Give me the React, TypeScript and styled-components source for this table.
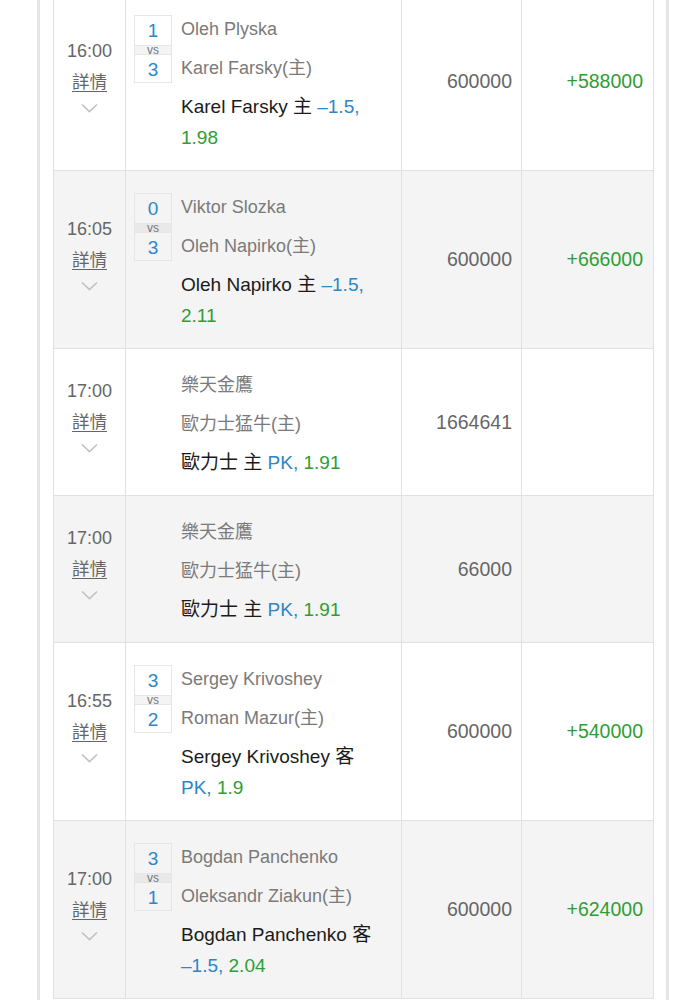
import React from "react";
import styled, { createGlobalStyle } from "styled-components";

const GlobalStyle = createGlobalStyle`
  body {
    margin: 0;
    background: #fff;
    font-family: "Liberation Sans", "Noto Sans CJK TC", sans-serif;
  }
`;

const Page = styled.div`
  padding-left: 37px;
  overflow: hidden;
`;

const Card = styled.div`
  width: 632px;
  box-sizing: border-box;
  border-left: 3px solid #e6e6e6;
  border-right: 3px solid #e6e6e6;
  padding: 0 14px 40px 13px;
  background: #fff;
`;

const Table = styled.div`
  width: 599px;
  margin-top: -8px;
  border-left: 1px solid #e1e1e1;
  border-right: 1px solid #e1e1e1;
  border-top: 1px solid #e1e1e1;
`;

const Row = styled.div<{ $striped: boolean }>`
  display: grid;
  grid-template-columns: 71px 276px 120px 130px;
  border-bottom: 1px solid #e1e1e1;
  background: ${(p) => (p.$striped ? "#f4f4f4" : "#fff")};
`;

const Cell = styled.div`
  box-sizing: border-box;
  border-left: 1px solid #e1e1e1;
`;

const TimeCell = styled.div`
  display: flex;
  flex-direction: column;
  align-items: center;
  justify-content: center;
  padding-bottom: 15px;
  color: #666;
`;

const Time = styled.div`
  font-size: 18px;
  line-height: 30px;
`;

const Detail = styled.a`
  font-size: 17.5px;
  line-height: 32px;
  color: #666;
  text-decoration: underline;
  text-underline-offset: 3px;
`;

const Chevron = styled.svg`
  display: block;
  margin-top: 5px;
`;

const MatchCell = styled(Cell)`
  display: grid;
  grid-template-columns: 38px 1fr;
  column-gap: 9px;
  padding: 22px 21px 17px 8px;
`;

const ScoreBox = styled.div`
  display: grid;
  grid-template-rows: 29px 10px 29px;
  border: 1px solid #e6e6e6;
  box-sizing: border-box;
  height: 68px;
`;

const Score = styled.div`
  display: flex;
  align-items: center;
  justify-content: center;
  font-size: 19px;
  color: #2c86c8;
`;

const Vs = styled.div`
  display: flex;
  align-items: center;
  justify-content: center;
  font-size: 12px;
  line-height: 10px;
  color: #777;
  background: rgba(0, 0, 0, 0.045);
  border-top: 1px solid #e6e6e6;
  border-bottom: 1px solid #e6e6e6;
`;

const Teams = styled.div`
  display: flex;
  flex-direction: column;
  gap: 10px;
`;

const Team = styled.div`
  font-size: 18px;
  line-height: 29px;
  color: #7a7a7a;
  white-space: nowrap;
`;

const Pick = styled.div`
  grid-column: 2;
  margin-top: 8px;
  font-size: 19px;
  line-height: 31px;
  color: #1b1b1b;
`;

const Handicap = styled.span`
  color: #2c86c8;
`;

const Odds = styled.span`
  color: #2e9e34;
`;

const AmountCell = styled(Cell)<{ $win?: boolean }>`
  display: flex;
  align-items: center;
  justify-content: flex-end;
  padding-right: ${(p) => (p.$win ? 8 : 9)}px;
  font-size: 19.5px;
  color: ${(p) => (p.$win ? "#2e9e34" : "#666")};
`;

interface Bet {
  time: string;
  score?: [number, number];
  away: string;
  home: string;
  pick: string;
  side: string;
  handicap: string;
  odds: string;
  stake: string;
  result?: string;
}

const bets: Bet[] = [
  { time: "16:00", score: [1, 3], away: "Oleh Plyska", home: "Karel Farsky", pick: "Karel Farsky", side: "主", handicap: "–1.5,", odds: "1.98", stake: "600000", result: "+588000" },
  { time: "16:05", score: [0, 3], away: "Viktor Slozka", home: "Oleh Napirko", pick: "Oleh Napirko", side: "主", handicap: "–1.5,", odds: "2.11", stake: "600000", result: "+666000" },
  { time: "17:00", away: "樂天金鷹", home: "歐力士猛牛", pick: "歐力士", side: "主", handicap: "PK,", odds: "1.91", stake: "1664641" },
  { time: "17:00", away: "樂天金鷹", home: "歐力士猛牛", pick: "歐力士", side: "主", handicap: "PK,", odds: "1.91", stake: "66000" },
  { time: "16:55", score: [3, 2], away: "Sergey Krivoshey", home: "Roman Mazur", pick: "Sergey Krivoshey", side: "客", handicap: "PK,", odds: "1.9", stake: "600000", result: "+540000" },
  { time: "17:00", score: [3, 1], away: "Bogdan Panchenko", home: "Oleksandr Ziakun", pick: "Bogdan Panchenko", side: "客", handicap: "–1.5,", odds: "2.04", stake: "600000", result: "+624000" },
];

const BetRow = ({ bet, striped }: { bet: Bet; striped: boolean }) => (
  <Row $striped={striped}>
    <TimeCell>
      <Time>{bet.time}</Time>
      <Detail>詳情</Detail>
      <Chevron width="17" height="10" viewBox="0 0 17 10">
        <polyline points="1,1.5 8.5,8.5 16,1.5" fill="none" stroke="#c2c2c2" strokeWidth="1.7" />
      </Chevron>
    </TimeCell>
    <MatchCell>
      {bet.score ? (
        <ScoreBox>
          <Score>{bet.score[0]}</Score>
          <Vs>vs</Vs>
          <Score>{bet.score[1]}</Score>
        </ScoreBox>
      ) : (
        <div />
      )}
      <Teams>
        <Team>{bet.away}</Team>
        <Team>{bet.home}(主)</Team>
      </Teams>
      <Pick>
        {bet.pick} {bet.side} <Handicap>{bet.handicap}</Handicap> <Odds>{bet.odds}</Odds>
      </Pick>
    </MatchCell>
    <AmountCell>{bet.stake}</AmountCell>
    <AmountCell $win>{bet.result}</AmountCell>
  </Row>
);

const App = () => {
  return (
    <Page>
      <GlobalStyle />
      <Card>
        <Table>
          {bets.map((bet, i) => (
            <BetRow key={i} bet={bet} striped={i % 2 === 1} />
          ))}
        </Table>
      </Card>
    </Page>
  );
};

export default App;
